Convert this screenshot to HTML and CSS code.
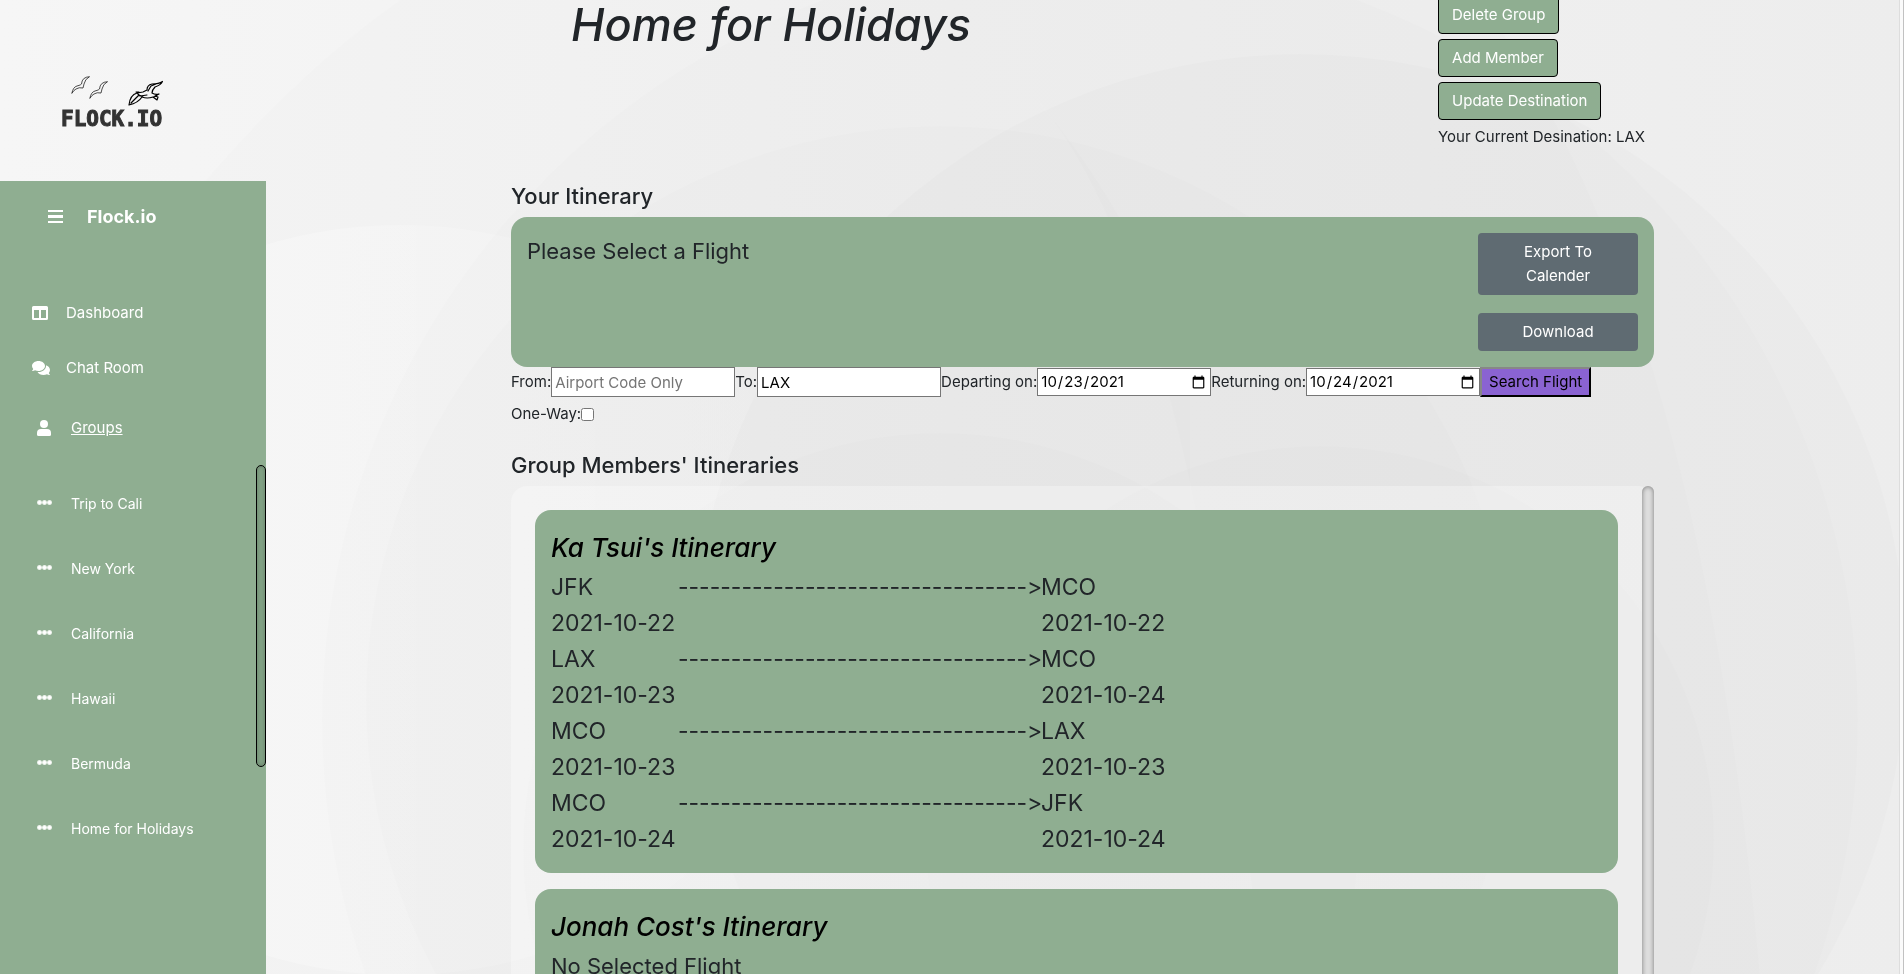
FILE: index.html
```html
<!DOCTYPE html>
<html lang="en">
<head>
<meta charset="utf-8">
<title>Flock.io</title>
<link rel="stylesheet" href="styles.css">
</head>
<body>
<svg class="backdrop" viewBox="0 0 1904 974" preserveAspectRatio="none" aria-hidden="true">
  <defs>
    <linearGradient id="base" x1="0" x2="1"><stop offset="0" stop-color="#f6f6f6"/><stop offset=".5" stop-color="#f1f1f1"/><stop offset="1" stop-color="#ededed"/></linearGradient>
    <linearGradient id="fade" x1="0" x2="1"><stop offset="0" stop-color="#fff" stop-opacity=".4"/><stop offset="1" stop-color="#fff" stop-opacity="0"/></linearGradient>
  </defs>
  <rect width="1904" height="974" fill="url(#base)"/>
  <path d="M205 181Q300 70 400 0H937L1040 103Q1130 210 1190 367V974H205Z" fill="#000" opacity=".008"/>
  <ellipse cx="400" cy="600" rx="420" ry="375" fill="url(#fade)"/>
  <circle cx="1090" cy="720" r="768" fill="#000" opacity=".006"/>
  <path d="M937 0L1040 103Q1200 300 1260 974H1760Q1700 300 1480 0Z" fill="#000" opacity=".006"/>
  <circle cx="940" cy="700" r="574" fill="#000" opacity=".006"/>
  <circle cx="1300" cy="660" r="606" fill="#000" opacity=".01"/>
  <circle cx="940" cy="850" r="417" fill="#000" opacity=".007"/>
  <circle cx="1320" cy="840" r="394" fill="#000" opacity=".007"/>
</svg>

<aside class="side">
  <div class="brand">
    <svg class="birds" viewBox="0 0 92 31" aria-hidden="true">
      <g fill="none" stroke="#222" stroke-linejoin="round" stroke-linecap="round">
        <path id="gull" stroke-width=".8" d="M1 17Q2 11 6 10Q10 9 10.500 8Q11 1 18.500 .7Q14 3 13 8L12 12Q8 11 5 13Q3 14 1 17Z"/>
        <use href="#gull" x="18" y="5"/>
        <path stroke="#000" stroke-width="1.200" d="M58 29Q59 19 66 17L72 16L76 14Q76 9 81 8Q88 8 91.500 5.500Q90 9 84 11Q81 14 81 17Q84 19 88 18L84 20L87 21L86 24L82 21Q76 23 71 21Q67 27 58 29ZM60 27L68 19L72 21M66 17L69 20L76 19M77 15L80 10L85 8M82 21L86 20M68 16L65 16"/>
      </g>
    </svg>
    <span class="brand-name">FLOCK.IO</span>
  </div>
  <nav class="nav">
    <div class="nav-head">
      <svg width="15" height="14" viewBox="0 0 15 14" aria-hidden="true"><path fill="#fff" d="M0 0h15v2H0zM0 5h15v3H0zM0 11h15v2H0z"/></svg>
      <span>Flock.io</span>
    </div>
    <a class="item" href="#dashboard"><svg width="18" height="16" viewBox="0 0 18 16" aria-hidden="true"><path fill="#fff" fill-rule="evenodd" d="M1.500 1h13Q16 1 16 2.500v11Q16 15 14.500 15h-13Q0 15 0 13.500v-11Q0 1 1.500 1zM2 5v8h5V5zM9 5v8h5V5z"/></svg>Dashboard</a>
    <a class="item" href="#chat"><svg width="18" height="16" viewBox="0 0 576 512" aria-hidden="true"><path fill="#fff" d="M416 192c0-88.400-93.100-160-208-160S0 103.600 0 192c0 34.300 14.100 65.900 38 92-13.400 30.200-35.500 54.200-35.800 54.500A8 8 0 0 0 8 352c36.600 0 66.900-12.300 88.700-25C128.900 342.700 167 352 208 352c114.900 0 208-71.600 208-160zm122 220c23.900-26 38-57.700 38-92 0-66.900-53.500-124.200-129.300-148.100.9 6.600 1.300 13.300 1.300 20.100 0 105.900-107.700 192-240 192-10.800 0-21.300-.8-31.700-1.900C207.800 439.600 281.800 480 368 480c41 0 79.100-9.200 111.300-25 21.800 12.700 52.100 25 88.700 25a8 8 0 0 0 5.800-13.500c-.3-.3-22.400-24.200-35.800-54.500z"/></svg>Chat Room</a>
    <a class="item groups" href="#groups"><svg width="14" height="16" viewBox="0 0 14 16" aria-hidden="true"><circle cx="7" cy="4" r="4" fill="#fff"/><path fill="#fff" d="M4 9h6q4 0 4 4v1.500q0 1.500-1.500 1.500h-11Q0 16 0 14.500V13q0-4 4-4z"/></svg><span>Groups</span></a>
    <ul class="trips">
      <li><a href="#cali"><i class="dots"></i>Trip to Cali</a></li>
      <li><a href="#ny"><i class="dots"></i>New York</a></li>
      <li><a href="#california"><i class="dots"></i>California</a></li>
      <li><a href="#hawaii"><i class="dots"></i>Hawaii</a></li>
      <li><a href="#bermuda"><i class="dots"></i>Bermuda</a></li>
      <li><a href="#holidays"><i class="dots"></i>Home for Holidays</a></li>
    </ul>
    <div class="nav-thumb"></div>
  </nav>
</aside>

<main class="main">
  <div class="content">
    <header class="top">
      <h1>Home for Holidays</h1>
      <div class="actions">
        <button class="btn" type="button">Delete Group</button>
        <button class="btn" type="button">Add Member</button>
        <button class="btn" type="button">Update Destination</button>
        <p>Your Current Desination: LAX</p>
      </div>
    </header>

    <section>
      <h2>Your Itinerary</h2>
      <div class="card mine">
        <p>Please Select a Flight</p>
        <div class="exports">
          <button class="btn grey" type="button">Export To Calender</button>
          <button class="btn grey" type="button">Download</button>
        </div>
      </div>
      <form class="search">
        <div class="fields">
          <label for="from">From:</label><input class="text" id="from" type="text" placeholder="Airport Code Only">
          <label for="to">To:</label><input class="text" id="to" type="text" value="LAX">
          <label for="depart">Departing on:</label><input class="date" id="depart" type="date" value="2021-10-23">
          <label for="return">Returning on:</label><input class="date" id="return" type="date" value="2021-10-24">
          <button class="go" type="button">Search Flight</button>
        </div>
        <div class="oneway"><label for="oneway">One-Way:</label><input id="oneway" type="checkbox"></div>
      </form>
    </section>

    <section class="members">
      <h2>Group Members' Itineraries</h2>
      <div class="panel">
        <article class="card">
          <h3>Ka Tsui's Itinerary</h3>
          <div class="flights">
            <span>JFK</span><span>---------------------------------&gt;</span><span>MCO</span>
            <span>2021-10-22</span><span></span><span>2021-10-22</span>
            <span>LAX</span><span>---------------------------------&gt;</span><span>MCO</span>
            <span>2021-10-23</span><span></span><span>2021-10-24</span>
            <span>MCO</span><span>---------------------------------&gt;</span><span>LAX</span>
            <span>2021-10-23</span><span></span><span>2021-10-23</span>
            <span>MCO</span><span>---------------------------------&gt;</span><span>JFK</span>
            <span>2021-10-24</span><span></span><span>2021-10-24</span>
          </div>
        </article>
        <article class="card">
          <h3>Jonah Cost's Itinerary</h3>
          <p>No Selected Flight</p>
        </article>
        <div class="panel-thumb"></div>
      </div>
    </section>
  </div>
</main>
<div class="page-scroll"></div>
</body>
</html>
```
FILE: styles.css
```css
* { box-sizing: border-box; }
body {
  margin: 0;
  height: 100vh;
  display: flex;
  overflow: hidden;
  background: #f2f2f2;
  color: #212529;
  font: 15px/24px Inter, "Liberation Sans", sans-serif;
}
h1, h2, h3, p, ul { margin: 0; padding: 0; }
button, input { font: inherit; }
.backdrop { position: fixed; inset: 0; width: 100%; height: 100%; z-index: -1; }

.side { width: 266px; flex: none; display: flex; flex-direction: column; }
.brand {
  height: 181px;
  flex: none;
  padding: 76px 0 0 61px;
  display: flex;
  flex-direction: column;
}
.birds { width: 92px; height: 31px; margin-left: 10px; }
.brand-name {
  font: bold 21px/24px "DejaVu Sans Mono", monospace;
  color: #333;
  -webkit-text-stroke: 1px #333;
}
.nav { position: relative; flex: 1; background: #8fae91; color: #fff; }
.nav-head {
  display: flex;
  align-items: center;
  gap: 24px;
  padding: 24px 0 0 48px;
  margin-bottom: 72px;
  font-weight: 700;
  font-size: 18px;
}
.item { display: flex; align-items: center; gap: 16px; padding-left: 32px; height: 24px; margin-bottom: 31px; color: #fff; text-decoration: none; }
.groups { margin-top: 36px; margin-bottom: 31px; padding-left: 37px; gap: 20px; }
.groups span { text-decoration: underline; }
.trips { list-style: none; }
.trips a { display: flex; align-items: center; height: 65px; padding-left: 37px; gap: 19px; color: #fff; text-decoration: none; font-size: 14px; }
.dots { width: 15px; height: 5px; margin-bottom: 2px; background: radial-gradient(circle, #fff 1px, rgba(255, 255, 255, .8) 2px, transparent 3px) 0 0 / 5px 5px; }
.nav-thumb {
  position: absolute;
  right: 0;
  top: 284px;
  width: 10px;
  height: 302px;
  border: 1px solid #000;
  border-radius: 5px;
  background: #83a386;
  box-shadow: inset 0 0 4px rgba(0, 0, 0, .25);
}

.main { flex: 1; display: flex; justify-content: center; min-width: 0; }
.content { width: 70%; margin-top: -4px; }
.top { display: flex; justify-content: space-between; padding-left: 60px; height: 181px; }
h1 { font-size: 45px; line-height: 58px; font-weight: 500; font-style: italic; }
.actions { width: 216px; display: flex; flex-direction: column; align-items: flex-start; gap: 5px; white-space: nowrap; }
.btn { height: 38px; padding: 0 13px; border: 1px solid #000; border-radius: 4px; background: #8fae91; color: #fff; }
h2 { font-size: 22px; line-height: 28px; font-weight: 500; padding-top: 5px; margin-bottom: 7px; }
.card { background: #8fae91; border-radius: 16px; padding: 16px; font-size: 22px; line-height: 36px; }
.mine { display: flex; justify-content: space-between; }
.exports { width: 160px; display: flex; flex-direction: column; gap: 18px; }
.grey { border: 0; background: #5f6b72; padding: 0 32px; min-height: 38px; line-height: 24px; font-size: 15px; }
.grey:first-child { height: 62px; }
.fields { display: flex; align-items: center; height: 30px; white-space: nowrap; }
.text { width: 184px; height: 30px; border: 1px solid #767676; padding: 1px 3px; color: #000; }
.text::placeholder { color: #757575; }
.date { width: 174px; height: 28px; border: 1px solid #767676; padding: 1px 2px; background: #fff; color: #000; }
.go { height: 30px; border: 2px outset #333; padding: 1px 7px; background: #8a63d2; color: #000; }
.oneway { display: flex; align-items: center; height: 34px; }
.oneway input { width: 13px; height: 13px; margin: 0; }
.members { padding-top: 15px; }
.panel { position: relative; padding: 24px 36px 24px 24px; border-radius: 16px; background: rgba(255, 255, 255, .3); display: flex; flex-direction: column; gap: 16px; }
h3 { font-size: 26px; line-height: 43px; font-weight: 500; font-style: italic; color: #000; }
.flights { font-size: 23px; display: grid; grid-template-columns: 127px 363px 1fr; grid-auto-rows: 36px; white-space: nowrap; font-variant-ligatures: none; font-feature-settings: "calt" 0; }
.panel-thumb { position: absolute; top: 0; right: 0; bottom: 0; width: 12px; border-radius: 6px; background: #dedede; box-shadow: inset 0 0 5px #777; }
.page-scroll { width: 5px; flex: none; border-left: 1px solid #ddd; background: linear-gradient(90deg, #fafafa 3px, #c1c1c1 3px); }
```
